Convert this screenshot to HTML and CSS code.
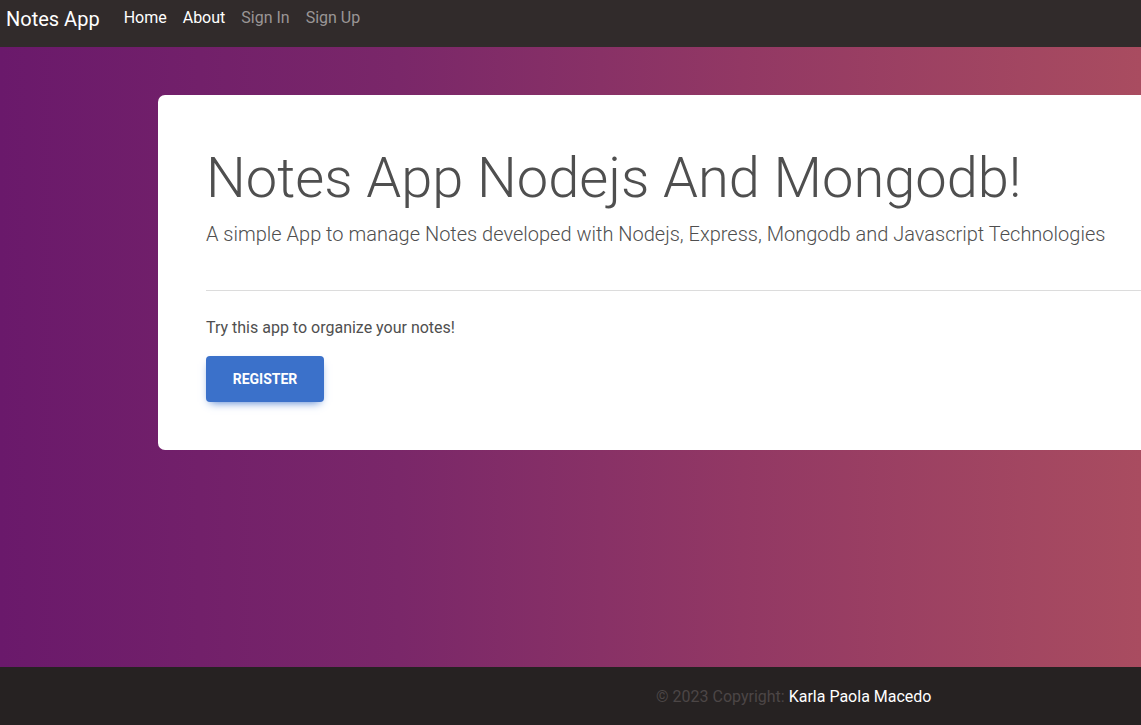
FILE: index.html
```html
<!DOCTYPE html>
<html lang="en">
<head>
<meta charset="utf-8">
<title>Notes App</title>
<link rel="stylesheet" href="styles.css">
</head>
<body>
<nav class="navbar">
  <a class="brand" href="#">Notes App</a>
  <ul class="nav-links">
    <li><a class="active" href="#">Home</a></li>
    <li><a class="active" href="#">About</a></li>
    <li><a href="#">Sign In</a></li>
    <li><a href="#">Sign Up</a></li>
  </ul>
</nav>
<main class="hero">
  <section class="card">
    <h1 class="title">Notes App Nodejs And Mongodb!</h1>
    <p class="lead">A simple App to manage Notes developed with Nodejs, Express, Mongodb and Javascript Technologies</p>
    <hr class="divider">
    <p class="text">Try this app to organize your notes!</p>
    <a class="btn" href="#">Register</a>
  </section>
</main>
<footer class="footer">
  <span class="copy">© 2023 Copyright:</span>&nbsp;<a class="author" href="#">Karla Paola Macedo</a>
</footer>
</body>
</html>
```
FILE: styles.css
```css
* { box-sizing: border-box; }
html, body { margin: 0; padding: 0; }
body {
  width: 1141px;
  height: 725px;
  overflow: hidden;
  font-family: Roboto, "Liberation Sans", sans-serif;
  display: flex;
  flex-direction: column;
}
a { text-decoration: none; }
.navbar {
  height: 47px;
  background: #312b2b;
  display: flex;
  align-items: flex-start;
  padding: 6px 6px 0;
  flex-shrink: 0;
}
.brand {
  color: #fff;
  font-size: 20px;
  line-height: 26px;
  margin-right: 24px;
}
.nav-links {
  list-style: none;
  margin: 0;
  padding: 0;
  display: flex;
  gap: 16px;
}
.nav-links a {
  color: #9a9696;
  font-size: 16px;
  line-height: 24px;
}
.nav-links a.active { color: #fff; }
.hero {
  flex: 1;
  background: linear-gradient(to right, #6a196b 0%, #7a2769 35%, #923864 65%, #a94c60 100%);
  padding: 48px 0 0 158px;
  overflow: hidden;
}
.card {
  width: 1100px;
  height: 355px;
  background: #fff;
  border-radius: 7px;
  padding: 43px 48px 48px;
  color: #4f4f4f;
}
.title {
  margin: 0;
  font-size: 56px;
  font-weight: 300;
  line-height: 80px;
  color: #4f4f4f;
}
.lead {
  margin: 1px 0 0;
  font-size: 20px;
  font-weight: 300;
  line-height: 30px;
  color: #4f4f4f;
}
.divider {
  margin: 41px 0 0;
  border: 0;
  border-top: 1px solid #dcdcdc;
}
.text {
  margin: 25px 0 16px;
  font-size: 16px;
  line-height: 24px;
  color: #4f4f4f;
}
.btn {
  display: inline-block;
  width: 118px;
  height: 46px;
  line-height: 46px;
  text-align: center;
  background: #3b71ca;
  color: #fff;
  font-size: 14px;
  font-weight: 700;
  text-transform: uppercase;
  border-radius: 4px;
  box-shadow: 0 4px 9px -4px #3b71ca;
}
.footer {
  height: 58px;
  background: #262222;
  flex-shrink: 0;
  display: flex;
  align-items: center;
  padding-left: 656px;
  font-size: 16px;
}
.copy { color: #4c4646; }
.author { color: #fff; }
```
